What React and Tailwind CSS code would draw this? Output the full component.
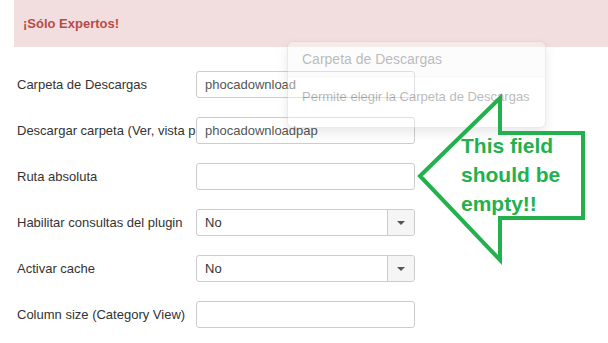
import React from 'react';

const Row = ({ label, children }) => (
    <div className="flex items-center h-[27px] mb-[19px]">
        <div className="w-[179px] shrink-0 overflow-hidden whitespace-nowrap text-[13px] text-[#333]">{label}</div>
        {children}
    </div>
);

const TextInput = ({ value }) => (
    <div className="w-[219px] h-[27px] border border-[#ccc] rounded-[3px] bg-white flex items-center px-[8px] text-[13px] text-[#555] overflow-hidden whitespace-nowrap">
        {value}
    </div>
);

const Select = ({ value }) => (
    <div className="w-[219px] h-[27px] border border-[#ccc] rounded-[3px] bg-white flex items-stretch text-[13px] text-[#333]">
        <div className="flex-1 flex items-center px-[8px]">{value}</div>
        <div className="w-[27px] bg-[#f5f5f5] border-l border-[#ccc] rounded-r-[3px] flex items-center justify-center">
            <span className="w-0 h-0 border-l-[4px] border-r-[4px] border-t-[4px] border-l-transparent border-r-transparent border-t-[#555]" />
        </div>
    </div>
);

const App = () => {
    return (
        <div className="relative w-[608px] h-[343px] bg-white overflow-hidden" style={{ fontFamily: '"Liberation Sans", Arial, sans-serif' }}>
            <div className="ml-[14px] h-[47px] bg-[#f2dede] flex items-center pl-[9px] text-[13px] font-bold text-[#b94a48]">
                ¡Sólo Expertos!
            </div>

            <div className="pl-[17px] pt-[24px]">
                <Row label="Carpeta de Descargas"><TextInput value="phocadownload" /></Row>
                <Row label="Descargar carpeta (Ver, vista previa)"><TextInput value="phocadownloadpap" /></Row>
                <Row label="Ruta absoluta"><TextInput value="" /></Row>
                <Row label="Habilitar consultas del plugin"><Select value="No" /></Row>
                <Row label="Activar cache"><Select value="No" /></Row>
                <Row label="Column size (Category View)"><TextInput value="" /></Row>
            </div>

            {/* tooltip popover, fading in */}
            <div className="absolute left-[287px] top-[41px] w-[259px] h-[87px] bg-white border border-[#ccc] rounded-[6px] shadow-[0_5px_10px_rgba(0,0,0,0.2)] opacity-40">
                <div className="h-[35px] flex items-center px-[14px] bg-[#fafafa] border-b border-[#ebebeb] rounded-t-[6px] text-[14px] text-[#555]">
                    Carpeta de Descargas
                </div>
                <div className="px-[14px] pt-[10px] text-[13px] whitespace-nowrap text-[#555]">Permite elegir la Carpeta de Descargas</div>
            </div>

            {/* annotation */}
            <svg className="absolute left-0 top-0" width="608" height="343">
                <polygon
                    points="420,176 500,98 500,133 583,133 583,218 500,218 500,260"
                    fill="none"
                    stroke="#22b14c"
                    strokeWidth="4"
                    strokeLinejoin="miter"
                />
            </svg>
            <div className="absolute left-[461px] top-[131px] text-[21px] leading-[29px] font-bold text-[#22b14c]" style={{ fontFamily: '"Liberation Sans", Arial, sans-serif' }}>
                This field<br />should be<br />empty!!
            </div>
        </div>
    );
};

export default App;
